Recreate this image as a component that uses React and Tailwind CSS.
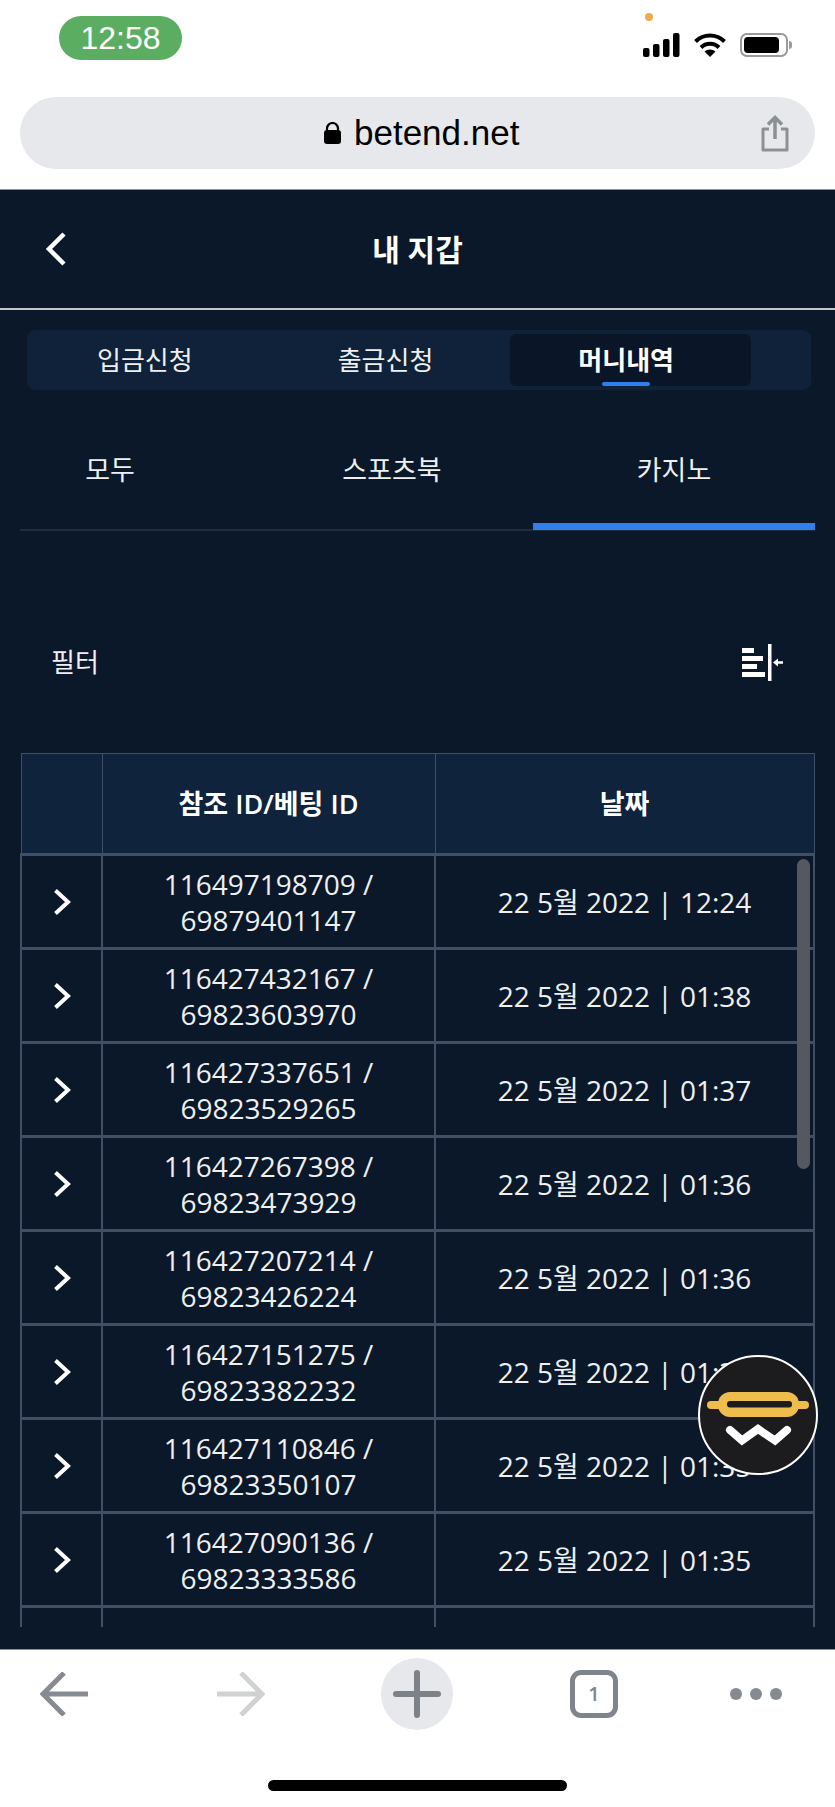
import React from "react";

const rows = [
  ["116497198709", "69879401147", "22 5월 2022 | 12:24"],
  ["116427432167", "69823603970", "22 5월 2022 | 01:38"],
  ["116427337651", "69823529265", "22 5월 2022 | 01:37"],
  ["116427267398", "69823473929", "22 5월 2022 | 01:36"],
  ["116427207214", "69823426224", "22 5월 2022 | 01:36"],
  ["116427151275", "69823382232", "22 5월 2022 | 01:35"],
  ["116427110846", "69823350107", "22 5월 2022 | 01:35"],
  ["116427090136", "69823333586", "22 5월 2022 | 01:35"],
  ["116427047080", "69823300412", "22 5월 2022 | 01:35"],
];

const StatusIcons = () => (
  <div className="relative flex items-center">
    <span className="absolute left-[2px] top-[-20px] h-2 w-2 rounded-full bg-[#f5a94e]" />
    <svg width="37" height="24" viewBox="0 0 37 24" fill="#000">
      <rect x="0" y="15" width="6.5" height="9" rx="2" />
      <rect x="10" y="11" width="6.5" height="13" rx="2" />
      <rect x="20" y="6" width="6.5" height="18" rx="2" />
      <rect x="30" y="0" width="6.5" height="24" rx="2" />
    </svg>
    <svg className="ml-[14px]" width="32" height="24" viewBox="0 0 32 24" fill="none" stroke="#000" strokeWidth="4">
      <path d="M1.5 8.5C9.5 0.5 22.5 0.5 30.5 8.5" />
      <path d="M7 14.5C12 9.5 20 9.5 25 14.5" />
      <path d="M16 24L10.5 18.5C13.5 15.8 18.5 15.8 21.5 18.5Z" fill="#000" stroke="none" />
    </svg>
    <div className="ml-[14px] flex h-6 w-12 items-center rounded-[7px] border-2 border-[#9a9a9a] p-[2px]">
      <div className="h-full w-[35px] rounded-[4px] bg-black" />
    </div>
    <div className="ml-[1px] h-2 w-[3px] rounded-r-sm bg-[#9a9a9a]" />
  </div>
);

const ShareIcon = () => (
  <svg width="30" height="37" viewBox="0 0 30 37" fill="none" stroke="#8b9095" strokeWidth="3">
    <path d="M15 24V3M8 9.5L15 2.5L22 9.5" strokeWidth="3.5" />
    <path d="M9 14H3V35H27V14H21" strokeLinejoin="round" />
  </svg>
);

const FilterIcon = () => (
  <svg width="41" height="37" viewBox="0 0 41 37" fill="#fff">
    <rect x="0" y="4" width="12" height="5" />
    <rect x="0" y="12" width="21" height="5" />
    <rect x="0" y="20" width="15" height="5" />
    <rect x="0" y="28" width="23" height="5" />
    <rect x="26" y="0" width="3.5" height="37" />
    <path d="M31 18.5L36 14.5V17.2H41V19.8H36V22.5Z" />
  </svg>
);

const RowChevron = () => (
  <svg className="mx-auto" width="18" height="26" viewBox="0 0 18 26" fill="none" stroke="#fff" strokeWidth="4">
    <path d="M2.5 1.5L15 13L2.5 24.5" />
  </svg>
);

const Logo = () => (
  <svg width="120" height="120" viewBox="0 0 120 120">
    <circle cx="60" cy="60" r="59" fill="#1c1c1e" stroke="#fff" strokeWidth="2" />
    <rect x="9" y="46" width="102" height="8" rx="4" fill="#efbd4c" />
    <rect x="20" y="37" width="81" height="25" rx="12" fill="#efbd4c" />
    <rect x="29" y="46" width="65" height="6.5" rx="3" fill="#1c1c1e" />
    <path d="M32 75L44 85.5L60 74L77 85.5L89 75" fill="none" stroke="#fff" strokeWidth="8" strokeLinecap="round" strokeLinejoin="miter" />
  </svg>
);

export default function App() {
  return (
    <div className="relative flex h-[1807px] w-[835px] flex-col overflow-hidden bg-white font-['Open_Sans','Noto_Sans_CJK_KR',sans-serif]">
      {/* 상단 상태바 */}
      <div className="flex h-[97px] items-start justify-between pl-[59px] pr-[43px] pt-4">
        <div className="flex h-11 w-[123px] items-center justify-center rounded-full bg-[#5bae61] font-['Liberation_Sans',sans-serif] text-[32px] text-white">
          12:58
        </div>
        <div className="pt-[17px]">
          <StatusIcons />
        </div>
      </div>

      {/* 주소창 */}
      <div className="mx-5 flex h-[72px] items-center rounded-full bg-[#e7e8ec] pl-[304px] pr-[25px]">
        <svg width="17" height="22" viewBox="0 0 17 22" fill="#000">
          <path d="M3 9V6.5a5.5 5.5 0 0 1 11 0V9" fill="none" stroke="#000" strokeWidth="2.2" />
          <rect x="0" y="8" width="17" height="14" rx="3" />
        </svg>
        <span className="ml-[13px] font-['Liberation_Sans',sans-serif] text-[35px] text-black">betend.net</span>
        <div className="ml-auto">
          <ShareIcon />
        </div>
      </div>

      {/* 본문 */}
      <div className="mt-5 flex flex-1 flex-col border-t border-[#8a9099] bg-[#0a1829] text-[#eef0f2]">
        <div className="relative flex h-[120px] shrink-0 items-center justify-center border-b-2 border-[#c3c6ca]">
          <svg className="absolute left-[45px] top-[42px]" width="21" height="34" viewBox="0 0 21 34" fill="none" stroke="#fff" strokeWidth="4.5">
            <path d="M19 2L4 17L19 32" />
          </svg>
          <span className="text-[30px] font-semibold text-white">내 지갑</span>
        </div>

        <div className="ml-[27px] mr-6 mt-5 h-[60px] shrink-0 rounded-lg bg-[#0f2239] px-[2px] py-1">
          <div className="grid h-full w-[722px] grid-cols-3 text-center text-[26px]">
            <div className="flex items-center justify-center pr-[9px]">입금신청</div>
            <div className="flex items-center justify-center pr-[9px]">출금신청</div>
            <div className="relative flex items-center justify-center rounded-md bg-[#0a1628] pr-[9px] font-semibold text-white">
              머니내역
              <span className="absolute bottom-0 left-[92px] h-1 w-12 rounded-sm bg-[#2f7fed]" />
            </div>
          </div>
        </div>

        <div className="mx-5 mt-[21px] flex h-[120px] shrink-0 justify-end border-b-2 border-[#1f2c3c] text-[27px]">
          <div className="flex w-[282px] shrink-0 items-center justify-center">모두</div>
          <div className="flex w-[282px] shrink-0 items-center justify-center">스포츠북</div>
          <div className="relative flex w-[282px] shrink-0 items-center justify-center">
            카지노
            <span className="absolute bottom-[-1px] left-0 right-0 h-[7px] bg-[#2f7fed]" />
          </div>
        </div>

        <div className="mb-9 ml-[51px] mr-[52px] mt-[76px] flex h-[110px] shrink-0 items-center justify-between text-[26px]">
          <span>필터</span>
          <FilterIcon />
        </div>

        <div className="relative mx-5 h-[874px] shrink-0 overflow-hidden">
          <table className="w-[793px] table-fixed border-collapse text-center text-[28px] leading-9">
            <colgroup>
              <col className="w-[81px]" />
              <col className="w-[333px]" />
              <col className="w-[379px]" />
            </colgroup>
            <thead>
              <tr className="h-[101px] bg-[#10233d] text-white">
                <th className="border border-[#3f5066]" />
                <th className="border border-[#3f5066] text-[27px] font-semibold">참조 ID/베팅 ID</th>
                <th className="border border-[#3f5066] text-[27px] font-semibold">날짜</th>
              </tr>
            </thead>
            <tbody>
              {rows.map((r) => (
                <tr key={r[0]} className="h-[94px]">
                  <td className="border-x-2 border-y-[3px] border-[#3f5066]">
                    <RowChevron />
                  </td>
                  <td className="border-x-2 border-y-[3px] border-[#3f5066]">
                    {r[0]} /
                    <br />
                    {r[1]}
                  </td>
                  <td className="border-x-2 border-y-[3px] border-[#3f5066]">{r[2]}</td>
                </tr>
              ))}
            </tbody>
          </table>
          <div className="absolute right-[5px] top-[106px] h-[310px] w-[13px] rounded-full bg-[#55595f]" />
        </div>
      </div>

      {/* 플로팅 버튼 */}
      <div className="absolute left-[698px] top-[1355px]">
        <Logo />
      </div>

      {/* 하단 툴바 */}
      <div className="h-[158px] shrink-0 border-t border-[#8a9099] bg-white">
        <div className="flex h-[87px] items-center pl-10">
          <svg width="48" height="44" viewBox="0 0 48 44" fill="none" stroke="#858b90" strokeWidth="5">
            <path d="M48 22H4M24 1L3 22L24 43" />
          </svg>
          <svg className="ml-[129px]" width="48" height="44" viewBox="0 0 48 44" fill="none" stroke="#cfd1d3" strokeWidth="5">
            <path d="M0 22H44M24 1L45 22L24 43" />
          </svg>
          <div className="ml-[116px] flex h-[72px] w-[72px] items-center justify-center rounded-full bg-[#e7e8ec]">
            <svg width="48" height="48" viewBox="0 0 48 48" fill="none" stroke="#7c8288" strokeWidth="6" strokeLinecap="round">
              <path d="M24 3V45M3 24H45" />
            </svg>
          </div>
          <div className="ml-[117px] flex h-12 w-12 items-center justify-center rounded-[11px] border-[5px] border-[#7f858b] text-[20px] font-semibold text-[#7f858b]">
            1
          </div>
          <div className="ml-28 flex gap-2">
            <span className="h-3 w-3 rounded-full bg-[#858b90]" />
            <span className="h-3 w-3 rounded-full bg-[#858b90]" />
            <span className="h-3 w-3 rounded-full bg-[#858b90]" />
          </div>
        </div>
        <div className="mx-auto mt-[43px] h-[11px] w-[299px] rounded-full bg-black" />
      </div>
    </div>
  );
}
